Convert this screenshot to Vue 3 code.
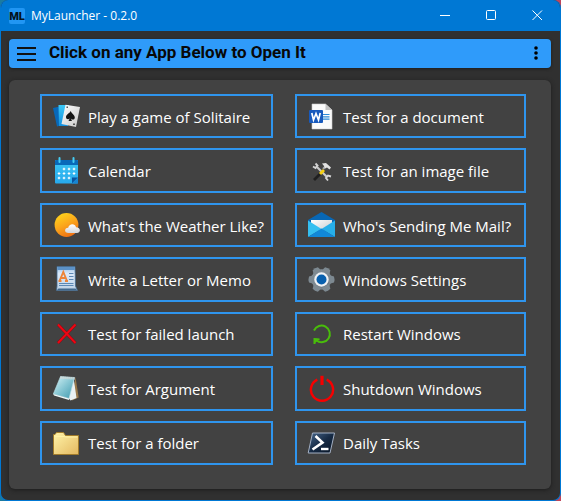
<script setup>
const apps = [
  { id: 'cards', label: 'Play a game of Solitaire' },
  { id: 'word', label: 'Test for a document' },
  { id: 'calendar', label: 'Calendar' },
  { id: 'tools', label: 'Test for an image file' },
  { id: 'weather', label: "What's the Weather Like?" },
  { id: 'mail', label: "Who's Sending Me Mail?" },
  { id: 'letter', label: 'Write a Letter or Memo' },
  { id: 'gear', label: 'Windows Settings' },
  { id: 'cross', label: 'Test for failed launch' },
  { id: 'restart', label: 'Restart Windows' },
  { id: 'notepad', label: 'Test for Argument' },
  { id: 'power', label: 'Shutdown Windows' },
  { id: 'folder', label: 'Test for a folder' },
  { id: 'shell', label: 'Daily Tasks' },
]
const teeth = [0, 60, 120, 180, 240, 300]
const calendarDots = [
  [12, 12], [17, 12], [22, 12],
  [7, 16.5], [12, 16.5], [17, 16.5], [22, 16.5],
  [7, 21], [12, 21], [17, 21],
]
</script>

<template>
  <div class="window">
    <header class="titlebar">
      <svg class="logo" viewBox="0 0 16 16" aria-hidden="true">
        <rect width="16" height="16" rx="2" fill="#2196f3" />
        <text x="8" y="12" text-anchor="middle" class="logo-text">ML</text>
      </svg>
      <span class="title">MyLauncher - 0.2.0</span>
      <div class="controls">
        <button type="button" class="control" aria-label="Minimize">
          <svg viewBox="0 0 11 11"><path d="M0 5.5H10" /></svg>
        </button>
        <button type="button" class="control" aria-label="Maximize">
          <svg viewBox="0 0 11 11"><rect x=".5" y=".5" width="9" height="9" rx="1" /></svg>
        </button>
        <button type="button" class="control" aria-label="Close">
          <svg viewBox="0 0 11 11"><path d="M.5 .5L10 10M10 .5L.5 10" /></svg>
        </button>
      </div>
    </header>

    <main class="content">
      <div class="toolbar">
        <button type="button" class="tool" aria-label="Menu">
          <svg class="menu-icon" viewBox="0 0 20 14"><path d="M0 1H19M0 7H19M0 13H19" stroke="#111" stroke-width="2" /></svg>
        </button>
        <h1>Click on any App Below to Open It</h1>
        <button type="button" class="tool more" aria-label="More options">
          <svg class="more-icon" viewBox="0 0 4 14">
            <circle cx="2" cy="2" r="1.8" /><circle cx="2" cy="7" r="1.8" /><circle cx="2" cy="12" r="1.8" />
          </svg>
        </button>
      </div>

      <section class="panel">
        <button v-for="app in apps" :key="app.id" type="button" class="app">
          <svg class="icon" viewBox="0 0 28 28" aria-hidden="true">
            <template v-if="app.id === 'cards'">
              <defs>
                <linearGradient id="cardFace" x1="0" y1="0" x2="1" y2="1"><stop stop-color="#fff" /><stop offset="1" stop-color="#c8c8c8" /></linearGradient>
                <linearGradient id="cardBlue" x1="0" y1="0" x2="0" y2="1"><stop stop-color="#3cc8f6" /><stop offset="1" stop-color="#1490df" /></linearGradient>
              </defs>
              <path d="M1 6L10 4L14 22L5 24.5Z" fill="#0868b8" />
              <path d="M6.500 3L17 3L16 24H7Z" fill="url(#cardBlue)" />
              <path d="M13.500 2.700L28 5L24 25L9.500 22Z" fill="url(#cardFace)" />
              <path d="M18.800 9C17.500 11.500 13.800 12.500 14 15.200C14.200 17.700 17 17.500 17.800 16.200L16.500 19H20L18.700 16.300C19.800 18.200 22.700 18 22.800 15.400C22.800 12.800 19.500 11.800 18.800 9Z" fill="#151515" />
              <path d="M14.500 4.500H16V6H14.500ZM21 21.500H23V23H21Z" fill="#555" />
            </template>
            <template v-else-if="app.id === 'word'">
              <path d="M5 2H18.500L25 8V27H5Z" fill="#fbfbfb" stroke="#ccc" stroke-width=".6" />
              <path d="M18.500 2V8H25Z" fill="#c4c4c4" />
              <path d="M15 12.500H22.500M15 14.800H22.500M15 17.200H22.500" stroke="#2d8bd8" stroke-width="1.200" />
              <rect x="2" y="8" width="14" height="13" rx="1" fill="#185abd" />
              <path d="M4.800 11L6.500 18L9 11.500L11.500 18L13.200 11" fill="none" stroke="#fff" stroke-width="1.700" />
            </template>
            <template v-else-if="app.id === 'calendar'">
              <defs><linearGradient id="calFill" x1="0" y1="0" x2="0" y2="1"><stop stop-color="#3cc6f4" /><stop offset="1" stop-color="#27a9ec" /></linearGradient></defs>
              <rect x="3" y="3" width="23" height="23.500" rx="1" fill="url(#calFill)" />
              <path d="M3 8V4Q3 3 4 3H25Q26 3 26 4V8Z" fill="#0869b9" />
              <path d="M7.500 1V5M21.500 1V5" stroke="#45cdf5" stroke-width="2" stroke-linecap="round" />
              <path v-for="[x, y] in calendarDots" :key="`${x}-${y}`" :d="`M${x - 1.3} ${y}h2.600M${x} ${y - 1.3}v2.600`" stroke="#fff" stroke-width="1.200" />
              <path d="M20 26.500V20.500H26Z" fill="#0a55a0" /><path d="M26 20.500V26.500H20Z" fill="#1684d2" />
            </template>
            <template v-else-if="app.id === 'tools'">
              <path d="M7 23L17 13" stroke="#202020" stroke-width="2.800" />
              <path d="M10 10L20 20" stroke="#c9c9c9" stroke-width="2.200" />
              <path d="M8.500 6.500L10.500 8.500L8.500 11L6 9.500M24 19.500L21 18.500L19 21L21 23.500" fill="none" stroke="#d4d4d4" stroke-width="1.900" />
              <path d="M13 17L17 13" stroke="#f5cf12" stroke-width="3" />
              <path d="M16 12L19 9" stroke="#aaa" stroke-width="2.200" />
              <path d="M15 6.500L19 6L24 10.500L22.500 12.500L20 10.500L18 11.500L17 9Z" fill="#e2e2e2" />
            </template>
            <template v-else-if="app.id === 'weather'">
              <defs>
                <linearGradient id="sunFill" x1=".2" y1="0" x2=".7" y2="1"><stop stop-color="#ffd51c" /><stop offset=".5" stop-color="#fba51b" /><stop offset="1" stop-color="#ee6b12" /></linearGradient>
                <linearGradient id="cloudFill" x1="0" y1="0" x2="0" y2="1"><stop stop-color="#fff" /><stop offset="1" stop-color="#d2d4d8" /></linearGradient>
              </defs>
              <circle cx="14.500" cy="14" r="11.900" fill="url(#sunFill)" />
              <path d="M16.500 22C12 22 12 17 16.200 16.800C17 12.500 23 12 24 16.200C29 16.200 29 22 25 22Z" fill="url(#cloudFill)" />
            </template>
            <template v-else-if="app.id === 'mail'">
              <defs><linearGradient id="mailPaper" x1="0" y1="0" x2="1" y2="1"><stop stop-color="#fff" /><stop offset="1" stop-color="#c5c9cd" /></linearGradient></defs>
              <path d="M1 9L14.500 1L28 9V13H1Z" fill="#0867b5" />
              <path d="M4 9H25V15L14.500 21L4 15Z" fill="url(#mailPaper)" />
              <path d="M1 9.500L14.500 18L1 26Z" fill="#35bff0" /><path d="M28 9.500L14.500 18L28 26Z" fill="#27afe9" />
              <path d="M1 26L14.500 17.500L28 26Z" fill="#1188d8" />
            </template>
            <template v-else-if="app.id === 'letter'">
              <defs><linearGradient id="letterFill" x1="0" y1="0" x2="0" y2="1"><stop stop-color="#95bee4" /><stop offset=".3" stop-color="#dceafa" /><stop offset="1" stop-color="#bdd0e4" /></linearGradient></defs>
              <path d="M5 1.500H23L23.500 21L25.500 25.500H4.500L5 21Z" fill="url(#letterFill)" stroke="#41688d" stroke-width=".8" />
              <path d="M5.500 2H22.800V5H5.500Z" fill="#5b91c7" />
              <path d="M7.500 16L11.300 7L15 16M9 13H14M6.500 16H9.500M13 16H16" fill="none" stroke="#ed8438" stroke-width="1.900" />
              <path d="M17 8.500H21.500M17 11.500H21.500M17 14.500H21.500M7 18.500H21.500M7 20.500H21.500" stroke="#5c88b5" stroke-width="1" />
              <path d="M5 25L6.500 23.500H23.500L25 25Z" fill="#41688d" />
            </template>
            <template v-else-if="app.id === 'gear'">
              <defs><linearGradient id="gearFill" x1="0" y1="0" x2="1" y2="1"><stop stop-color="#8d9ba4" /><stop offset="1" stop-color="#66717a" /></linearGradient></defs>
              <circle cx="14.500" cy="14.500" r="10.200" fill="url(#gearFill)" />
              <path v-for="angle in teeth" :key="angle" d="M22 10L27 11.500Q28 14.500 27 17.500L22 19Z" fill="#7d8991" :transform="`rotate(${angle} 14.500 14.500)`" />
              <circle cx="14.500" cy="14.500" r="7.200" fill="#f0f2f4" /><circle cx="14.500" cy="14.500" r="5" fill="#0860ae" />
            </template>
            <template v-else-if="app.id === 'cross'">
              <path d="M6 4.500L23.500 23M23.500 4.500L6 23" fill="none" stroke="#8b0712" stroke-width="2.800" />
              <path d="M6 4.500L23.500 23M23.500 4.500L6 23" fill="none" stroke="#ed0713" stroke-width="1.900" />
            </template>
            <template v-else-if="app.id === 'restart'">
              <path d="M7 10.500A8.300 8.300 0 1 1 9.500 20.500" fill="none" stroke="#49bd0b" stroke-width="2" />
              <path d="M7.500 24V19L12.500 19.500" fill="none" stroke="#49bd0b" stroke-width="2" />
              <path d="M7 18.500L12.500 19L7.500 23.500Z" fill="#49bd0b" />
            </template>
            <template v-else-if="app.id === 'notepad'">
              <defs><linearGradient id="noteFill" x1="0" y1="0" x2="1" y2="1"><stop stop-color="#d9f4f7" /><stop offset=".5" stop-color="#86c6d3" /><stop offset="1" stop-color="#3e98ad" /></linearGradient></defs>
              <path d="M23.500 3L26.700 23.500L20 26.500Z" fill="#98794b" />
              <path d="M21.500 3L24.500 24L18.500 26.500L15 22Z" fill="#e9f1f3" />
              <path d="M8.500 2.500L22.500 3.500L17 24.500L1.300 20Z" fill="url(#noteFill)" stroke="#b9dfe7" stroke-width=".6" />
              <path d="M8.500 3.500L23 4.500" stroke="#d7d8d5" stroke-width="2.400" stroke-dasharray="1.200 .8" />
              <path d="M1.300 20L17 24.500V26L2 21.500Z" fill="#eef9fa" />
            </template>
            <template v-else-if="app.id === 'power'">
              <path d="M10.300 5.600A11.100 11.100 0 1 0 19.700 5.600" fill="none" stroke="#f70000" stroke-width="2.400" />
              <path d="M15 1.800V11" stroke="#f70000" stroke-width="3.200" />
            </template>
            <template v-else-if="app.id === 'folder'">
              <defs><linearGradient id="folderFill" x1="0" y1="0" x2="1" y2="1"><stop stop-color="#fff4a9" /><stop offset="1" stop-color="#e4b860" /></linearGradient></defs>
              <path d="M1.500 25.500V5.500H3L4.500 3.500H11.500L13.500 6.500H26.500V25.500Z" fill="url(#folderFill)" stroke="#a17b2b" stroke-width="1" />
              <path d="M2.500 7.500H12L14 8H25.500" fill="none" stroke="#fff2a5" stroke-width="1" />
            </template>
            <template v-else>
              <defs><linearGradient id="shellFill" x1="0" y1="0" x2="1" y2="1"><stop stop-color="#48688e" /><stop offset=".5" stop-color="#172b45" /><stop offset="1" stop-color="#071323" /></linearGradient></defs>
              <path d="M5.500 4H27.500L23 24H1.200Z" fill="url(#shellFill)" stroke="#a4b1c5" stroke-width="1" />
              <path d="M8.500 7L15.500 13.500L5.500 20.500" fill="none" stroke="#fff" stroke-width="2.600" />
              <path d="M14 20H21.500" stroke="#fff" stroke-width="2.400" />
            </template>
          </svg>
          <span class="label">{{ app.label }}</span>
        </button>
      </section>
    </main>
  </div>
</template>

<style>
body {
  background: linear-gradient(to right, #1b7ba0, #c0455a);
}
</style>

<style scoped>
.window {
  box-sizing: border-box;
  min-height: 100vh;
  display: flex;
  flex-direction: column;
  overflow: hidden;
  border: 1px solid #0078d4;
  border-top: 0;
  border-radius: 8px;
  background: #303030;
  color: #fff;
  font-family: "Open Sans", "Noto Sans", sans-serif;
}
button {
  margin: 0;
  padding: 0;
  border: 0;
  background: transparent;
  color: inherit;
  font: inherit;
}
.titlebar {
  display: flex;
  align-items: center;
  height: 31px;
  padding-left: 8px;
  background: #0078d4;
}
.logo {
  width: 16px;
  height: 16px;
  margin-right: 6px;
}
.logo-text {
  font: 900 11px Roboto, sans-serif;
  fill: #041320;
}
.title {
  font-size: 12px;
  line-height: 16px;
}
.controls {
  display: flex;
  align-self: stretch;
  margin-left: auto;
}
.control {
  display: grid;
  place-items: center;
  width: 46px;
}
.control svg {
  width: 11px;
  height: 11px;
  fill: none;
  stroke: #fff;
  stroke-width: 1;
}
.content {
  flex: 1;
  display: flex;
  flex-direction: column;
  gap: 12px;
  padding: 8px 9px 11px 8px;
}
.toolbar {
  display: flex;
  align-items: center;
  height: 29px;
  padding: 0 8px;
  border-radius: 4px;
  background: #2f9bfa;
  color: #080808;
  box-shadow: 0 1px 3px #1c1c1c;
}
.tool {
  display: flex;
}
.menu-icon {
  width: 20px;
  height: 14px;
}
.more {
  margin-left: auto;
  padding: 0 5px 2px;
}
.more-icon {
  width: 4px;
  height: 14px;
}
h1 {
  margin: 0 0 0 12px;
  padding-bottom: 4px;
  font: bold 17px/20px Roboto, sans-serif;
}
.panel {
  flex: 1;
  display: grid;
  grid-template-columns: minmax(0, 233fr) minmax(0, 231fr);
  grid-auto-rows: 1fr;
  gap: 10px 22px;
  padding: 14px 25px 24px 31px;
  border-radius: 6px;
  background: #424242;
  box-shadow: 0 1px 4px #1c1c1c;
}
.app {
  display: flex;
  align-items: center;
  gap: 8px;
  min-height: 44px;
  padding: 0 10px;
  border: 2px solid #2f95ee;
  font-size: 15px;
  line-height: 20px;
  text-align: left;
  white-space: nowrap;
}
.label {
  padding-top: 1px;
}
.icon {
  flex: none;
  width: 28px;
  height: 28px;
}
</style>
